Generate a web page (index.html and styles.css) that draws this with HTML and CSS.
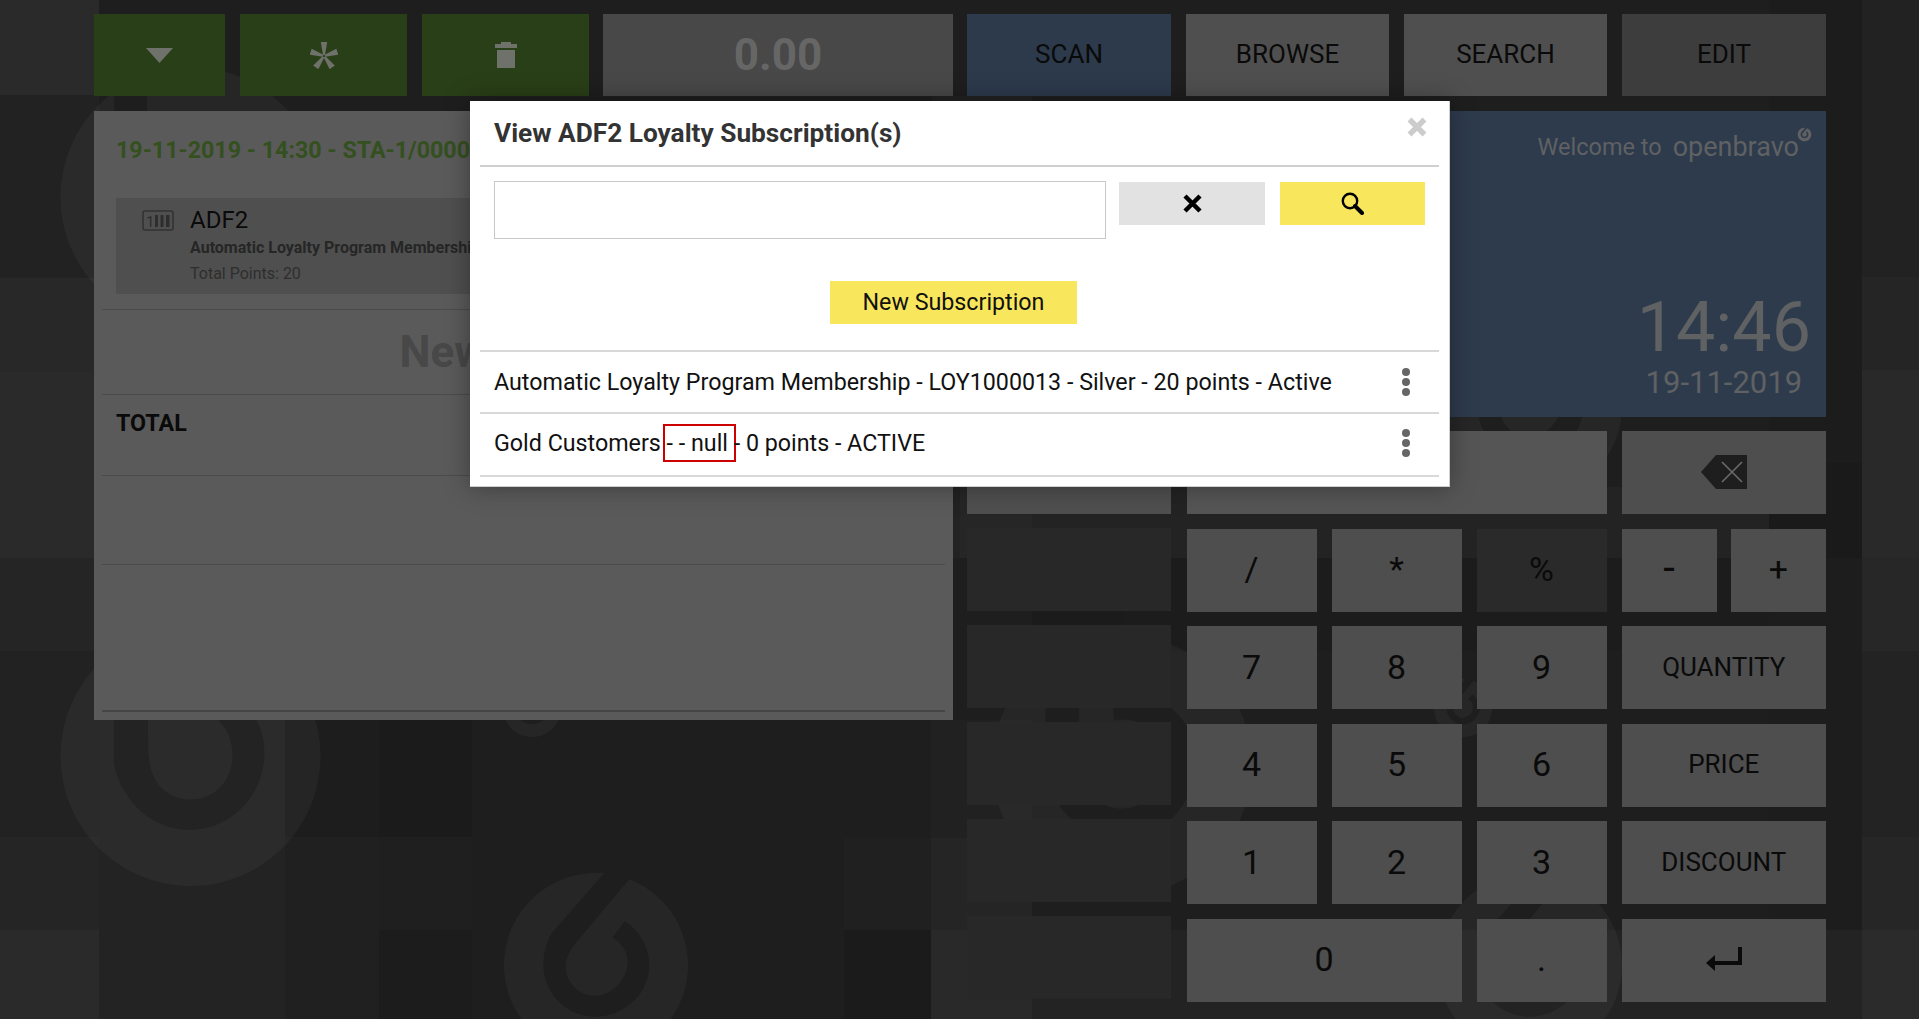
FILE: index.html
```html
<!DOCTYPE html>
<html lang="en">
<head>
<meta charset="utf-8">
<title>Openbravo POS</title>
<link rel="stylesheet" href="styles.css">
</head>
<body>
<svg class="backdrop" width="1919" height="1019" viewBox="0 0 1919 1019" aria-hidden="true">
  <defs>
    <path id="drop" d="M36.2,-93.2 A100,100 0 1 1 8.7,-99.6 L-48.2,-34.4 C-54,-25 -57.2,-13 -57.2,0 C-57.2,31 -32,56.2 -1,56.2 C31,56.2 58,31 58,0 C58,-20 47,-37 31.5,-47.8 L17.8,-30 C28,-24 34.4,-14 34.4,-3.6 C34.4,16 17,33.3 -1,33.3 C-18,33.3 -33,19 -33,1.8 C-33,-8 -27,-18 -21,-25.4 Z"/>
  </defs>
  <rect width="1919" height="1019" fill="#1e1e1e"/>
  <g>
    <rect x="0" y="0" width="99" height="95" fill="#2a2a2a"/>
    <rect x="0" y="95" width="99" height="183" fill="#222"/>
    <rect x="0" y="278" width="99" height="94" fill="#282828"/>
    <rect x="0" y="372" width="99" height="186" fill="#2a2a2a"/>
    <rect x="0" y="558" width="99" height="93" fill="#252525"/>
    <rect x="0" y="651" width="99" height="186" fill="#222"/>
    <rect x="0" y="837" width="99" height="93" fill="#252525"/>
    <rect x="0" y="930" width="99" height="89" fill="#2a2a2a"/>
    <rect x="99" y="720" width="186" height="117" fill="#232323"/>
    <rect x="99" y="837" width="186" height="182" fill="#232323"/>
    <rect x="285" y="720" width="94" height="117" fill="#1d1d1d"/>
    <rect x="285" y="837" width="94" height="182" fill="#202020"/>
    <rect x="379" y="720" width="93" height="117" fill="#1b1b1b"/>
    <rect x="379" y="837" width="93" height="93" fill="#1f1f1f"/>
    <rect x="379" y="930" width="93" height="89" fill="#1c1c1c"/>
    <rect x="472" y="930" width="93" height="89" fill="#1e1e1e"/>
    <rect x="844" y="930" width="87" height="89" fill="#1b1b1b"/>
    <rect x="844" y="838" width="87" height="92" fill="#202020"/>
    <rect x="931" y="720" width="101" height="118" fill="#212121"/>
    <rect x="931" y="838" width="101" height="92" fill="#252525"/>
    <rect x="931" y="930" width="101" height="89" fill="#292929"/>
    <rect x="932" y="96" width="100" height="462" fill="#222"/>
    <rect x="960" y="487" width="72" height="71" fill="#262626"/>
    <rect x="1032" y="558" width="93" height="93" fill="#1b1b1b"/>
    <rect x="1032" y="651" width="430" height="186" fill="#1e1e1e"/>
    <rect x="1032" y="930" width="830" height="89" fill="#232323"/>
    <rect x="1032" y="487" width="830" height="71" fill="#232323"/>
    <rect x="1125" y="558" width="737" height="93" fill="#1c1c1c"/>
    <rect x="1769" y="0" width="93" height="463" fill="#1c1c1c"/>
    <rect x="1769" y="463" width="93" height="95" fill="#1a1a1a"/>
    <rect x="1769" y="558" width="93" height="372" fill="#1d1d1d"/>
    <rect x="1862" y="0" width="57" height="277" fill="#222"/>
    <rect x="1862" y="277" width="57" height="93" fill="#252525"/>
    <rect x="1862" y="370" width="57" height="187" fill="#292929"/>
    <rect x="1862" y="557" width="57" height="94" fill="#272727"/>
    <rect x="1862" y="651" width="57" height="186" fill="#232323"/>
    <rect x="1862" y="837" width="57" height="93" fill="#262626"/>
    <rect x="1862" y="930" width="57" height="89" fill="#2b2b2b"/>
  </g>
  <g class="mark">
    <use href="#drop" transform="translate(190.5,756) rotate(-41) scale(1.3)"/>
    <use href="#drop" transform="translate(190.5,197) rotate(-41) scale(1.3)"/>
    <use href="#drop" transform="translate(1122,765) rotate(-41) scale(1.3)"/>
    <use href="#drop" transform="translate(596,965) scale(.92)"/>
    <use href="#drop" transform="translate(1530,965) scale(.92)"/>
    <use href="#drop" transform="translate(1530,406) scale(.92)"/>
    <use href="#drop" transform="translate(532,708) scale(.29)"/>
    <use href="#drop" transform="translate(1463,708) scale(.29)"/>
  </g>
</svg>

<div class="pos">
  <section class="side">
    <div class="toolbar">
      <div class="tool tool-menu">
        <svg width="27" height="15" viewBox="0 0 27 15"><path class="ico" d="M0 0H27L13.5 15Z"/></svg>
      </div>
      <div class="tool tool-wide">
        <svg width="28" height="27" viewBox="-14 -14 28 27">
          <g class="ico">
            <path d="M-1 -1 L-3.2 -14 H3.2 L1 -1Z"/>
            <path d="M-1 -1 L-3.2 -14 H3.2 L1 -1Z" transform="rotate(72)"/>
            <path d="M-1 -1 L-3.2 -14 H3.2 L1 -1Z" transform="rotate(144)"/>
            <path d="M-1 -1 L-3.2 -14 H3.2 L1 -1Z" transform="rotate(216)"/>
            <path d="M-1 -1 L-3.2 -14 H3.2 L1 -1Z" transform="rotate(288)"/>
          </g>
        </svg>
      </div>
      <div class="tool tool-wide">
        <svg width="22" height="26" viewBox="0 0 22 26"><path class="ico" d="M6 0H16V2H22V6H0V2H6ZM2 8H20V26H2Z"/></svg>
      </div>
      <div class="total-box">0.00</div>
    </div>
    <div class="ticket">
      <div class="ticket-head">19-11-2019 - 14:30 - STA-1/0000123</div>
      <div class="item">
        <svg class="barcode" width="32" height="21" viewBox="0 0 32 21">
          <rect x="1" y="1" width="30" height="19" rx="2" class="bc-box"/>
          <text x="4" y="16.5" class="bc-one">1</text>
          <rect x="13" y="5" width="3" height="12" class="bc-bar"/>
          <rect x="18.5" y="5" width="3" height="12" class="bc-bar"/>
          <rect x="24" y="5" width="3.5" height="12" class="bc-bar"/>
        </svg>
        <div class="item-text">
          <div class="item-name">ADF2</div>
          <div class="item-sub">Automatic Loyalty Program Membership</div>
          <div class="item-points">Total Points: 20</div>
        </div>
      </div>
      <div class="new-line">New Receipt</div>
      <div class="total-line">TOTAL</div>
      <div class="empty-line"></div>
      <div class="ticket-end"></div>
    </div>
  </section>

  <section class="side">
    <div class="toolbar toolbar-right">
      <div class="tab tab-scan">SCAN</div>
      <div class="tab">BROWSE</div>
      <div class="tab">SEARCH</div>
      <div class="tab tab-edit">EDIT</div>
    </div>
    <div class="welcome">
      <div class="welcome-top">
        <span>Welcome to</span>
        <span class="brand">openbravo</span>
        <svg class="brand-mark" width="15" height="15" viewBox="-110 -110 220 220"><use href="#drop"/></svg>
      </div>
      <div class="clock">
        <div class="time">14:46</div>
        <div class="date">19-11-2019</div>
      </div>
    </div>
    <div class="keypad">
      <div class="spare">
        <div class="spare-key spare-first"></div>
        <div class="spare-key"></div>
        <div class="spare-key"></div>
        <div class="spare-key"></div>
        <div class="spare-key"></div>
        <div class="spare-key"></div>
      </div>
      <div class="keys">
        <div class="display"></div>
        <div class="key key-word">
          <svg width="46" height="34" viewBox="0 0 46 34">
            <path class="bs-body" d="M15 0H46V34H15L0 17Z"/>
            <path class="bs-x" d="M21 7L41 27M41 7L21 27"/>
          </svg>
        </div>
        <div class="key">/</div>
        <div class="key">*</div>
        <div class="key key-off">%</div>
        <div class="pair">
          <div class="key key-minus">-</div>
          <div class="key">+</div>
        </div>
        <div class="key">7</div>
        <div class="key">8</div>
        <div class="key">9</div>
        <div class="key key-word">QUANTITY</div>
        <div class="key">4</div>
        <div class="key">5</div>
        <div class="key">6</div>
        <div class="key key-word">PRICE</div>
        <div class="key">1</div>
        <div class="key">2</div>
        <div class="key">3</div>
        <div class="key key-word">DISCOUNT</div>
        <div class="key key-zero">0</div>
        <div class="key">.</div>
        <div class="key key-word">
          <svg width="36" height="24" viewBox="0 0 36 24">
            <path class="enter-line" d="M34 0V16H8"/>
            <path class="enter-head" d="M0 16L9 8V24Z"/>
          </svg>
        </div>
      </div>
    </div>
  </section>
</div>

<div class="modal">
  <header class="modal-head">
    <h1 class="modal-title">View ADF2 Loyalty Subscription(s)</h1>
    <svg class="modal-close" width="20" height="20" viewBox="0 0 20 20"><path d="M2.5 2.5L17.5 17.5M17.5 2.5L2.5 17.5"/></svg>
  </header>
  <div class="filter">
    <div class="filter-input"></div>
    <div class="filter-btn btn-clear">
      <svg width="19" height="19" viewBox="0 0 19 19"><path class="x-black" d="M2 2L17 17M17 2L2 17"/></svg>
    </div>
    <div class="filter-btn btn-search">
      <svg width="23" height="23" viewBox="0 0 23 23"><circle class="lens" cx="9" cy="9" r="7.2"/><path class="handle" d="M14 14L21 21"/></svg>
    </div>
  </div>
  <div class="new-row"><div class="new-btn">New Subscription</div></div>
  <div class="sub-list">
    <div class="sub-row">
      <span>Automatic Loyalty Program Membership - LOY1000013 - Silver - 20 points - Active</span>
      <svg class="more" width="10" height="28" viewBox="0 0 10 28"><circle cx="5" cy="4" r="4"/><circle cx="5" cy="14" r="4"/><circle cx="5" cy="24" r="4"/></svg>
    </div>
    <div class="sub-row sub-row-last">
      <span>Gold Customers <span class="flag">- - null</span> - 0 points - ACTIVE</span>
      <svg class="more" width="10" height="28" viewBox="0 0 10 28"><circle cx="5" cy="4" r="4"/><circle cx="5" cy="14" r="4"/><circle cx="5" cy="24" r="4"/></svg>
    </div>
  </div>
</div>
</body>
</html>
```

FILE: styles.css
```css
* { box-sizing: border-box; }
html, body { margin: 0; padding: 0; height: 100%; }
body {
  width: 1919px;
  height: 1019px;
  overflow: hidden;
  position: relative;
  background: #1e1e1e;
  font-family: Roboto, "Liberation Sans", sans-serif;
  color: #0a0a0a;
}
.backdrop { position: absolute; left: 0; top: 0; }
.mark { fill: rgba(255, 255, 255, .04); }

.pos {
  position: relative;
  display: flex;
  gap: 14px;
  padding: 14px 0 0 94px;
}
.side { width: 859px; display: flex; flex-direction: column; gap: 15px; }

.toolbar { display: flex; gap: 15px; height: 82px; }
.tool {
  background: #293f17;
  display: flex;
  align-items: center;
  justify-content: center;
  width: 131px;
}
.tool-wide { width: 167px; }
.ico { fill: #6f716b; }
.total-box {
  flex: 1;
  margin-left: -1px;
  background: #484848;
  color: #666;
  font-size: 44px;
  font-weight: 700;
  display: flex;
  align-items: center;
  justify-content: center;
}
.tab {
  width: 203px;
  background: #4f4f4f;
  display: flex;
  align-items: center;
  justify-content: center;
  font-size: 26px;
  padding-bottom: 2px;
}
.tab-scan { background: #2c3a4c; width: 204px; }
.tab-edit { background: #3d3d3d; width: 204px; }

.ticket {
  height: 609px;
  background: #5a5a5a;
  padding: 0 8px;
  display: flex;
  flex-direction: column;
}
.ticket-head {
  height: 78px;
  padding-left: 14px;
  display: flex;
  align-items: center;
  font-size: 23.25px;
  font-weight: 700;
  color: #34501f;
  white-space: nowrap;
}
.item {
  margin: 9px 14px 15px;
  height: 96px;
  background: #4f4f4f;
  display: flex;
  padding: 12px 0 0 26px;
}
.barcode { flex: none; margin-right: 16px; }
.bc-box { fill: none; stroke: #333; stroke-width: 1.6; }
.bc-bar { fill: #2e2e2e; }
.bc-one { font-size: 15px; fill: #2e2e2e; font-family: Roboto, sans-serif; }
.item-text { margin-top: -4px; }
.item-name { font-size: 24px; line-height: 28px; }
.item-sub { font-size: 16px; line-height: 28px; font-weight: 700; color: #262626; white-space: nowrap; }
.item-points { font-size: 16px; line-height: 24px; color: #2e2e2e; }
.new-line {
  height: 85px;
  border-top: 1px solid #4b4b4b;
  display: flex;
  align-items: center;
  justify-content: center;
  font-size: 44px;
  font-weight: 700;
  color: #484848;
}
.total-line {
  height: 81px;
  border-top: 1px solid #4b4b4b;
  padding: 13px 0 0 14px;
  font-size: 23.25px;
  line-height: 30px;
  font-weight: 700;
}
.empty-line { height: 89px; border-top: 1px solid #4b4b4b; }
.ticket-end { height: 148px; border-top: 1px solid #4b4b4b; border-bottom: 2px solid #454545; }

.welcome {
  height: 306px;
  background: #2e3b4d;
  color: #5f6163;
  padding: 0 12px 0 0;
  display: flex;
  flex-direction: column;
  align-items: flex-end;
}
.welcome-top {
  height: 71px;
  display: flex;
  align-items: center;
  font-size: 23.5px;
  position: relative;
  padding-right: 15px;
}
.brand { font-size: 27px; margin-left: 11px; }
.brand-mark { position: absolute; right: 2px; top: 16px; fill: #5f6163; }
.clock { margin-top: 107px; padding-right: 3px; text-align: center; }
.time { font-size: 70px; font-weight: 400; line-height: 74px; margin-top: 1px; }
.date { font-size: 31px; line-height: 38px; }

.keypad { display: flex; gap: 15.5px; height: 571px; margin-top: -1px; }
.spare { width: 204px; display: flex; flex-direction: column; gap: 14px; }
.spare-key { height: 83px; background: #282828; }
.spare-first { background: #4f4f4f; }
.keys {
  flex: 1;
  display: grid;
  grid-template-columns: 130px 130px 130px 204.5px;
  grid-template-rows: repeat(6, 83px);
  column-gap: 15px;
  row-gap: 14.5px;
}
.display { grid-column: 1 / span 3; background: #555; }
.key {
  background: #4e4e4e;
  display: flex;
  align-items: center;
  justify-content: center;
  font-size: 34px;
  padding-bottom: 2px;
}
.key-word { font-size: 26px; }
.key-minus { font-size: 42px; padding-bottom: 6px; }
.key-off { background: #2a2a2a; }
.key-zero { grid-column: 1 / span 2; }
.pair { display: flex; gap: 14px; }
.pair .key { flex: 1; }
.bs-body { fill: #1e1e1e; }
.bs-x { stroke: #6a6a6a; stroke-width: 1.6; fill: none; }
.enter-line { stroke: #0a0a0a; stroke-width: 4; fill: none; }
.enter-head { fill: #0a0a0a; }

.modal {
  position: absolute;
  left: 470px;
  top: 101px;
  width: 980px;
  height: 386px;
  background: #fff;
  padding: 0 10px;
  box-shadow: 0 0 24px rgba(0, 0, 0, .35);
  border: 1px solid #cfcfcf;
  border-width: 0 1px 1px 0;
}
.modal-head {
  position: relative;
  height: 66px;
  border-bottom: 2px solid #d0d0d0;
  display: flex;
  align-items: center;
  padding-left: 14px;
}
.modal-title { margin: 0; font-size: 26.25px; font-weight: 700; color: #333; }
.modal-close { position: absolute; right: 12px; top: 16px; }
.modal-close path { stroke: #ccc; stroke-width: 5.5; fill: none; }
.filter { display: flex; padding: 14px 0 0 14px; height: 114px; align-items: flex-start; }
.filter-input { width: 612px; height: 58px; border: 1px solid #c8c8c8; }
.filter-btn {
  height: 43px;
  display: flex;
  align-items: center;
  justify-content: center;
  margin-top: 1px;
  width: 146px;
}
.btn-clear { background: #e2e2e2; margin-left: 13px; }
.btn-search { background: #f8e75d; margin-left: 15px; width: 145px; }
.x-black { stroke: #000; stroke-width: 4.5; fill: none; }
.lens { fill: none; stroke: #000; stroke-width: 2.4; }
.handle { stroke: #000; stroke-width: 4; stroke-linecap: round; }
.new-row { display: flex; justify-content: center; height: 69px; padding-right: 12px; }
.new-btn {
  width: 247px;
  height: 43px;
  background: #f8e75d;
  display: flex;
  align-items: center;
  justify-content: center;
  font-size: 23.25px;
  color: #111;
  padding-bottom: 2px;
}
.sub-row {
  height: 62px;
  border-top: 2px solid #d8d8d8;
  display: flex;
  align-items: center;
  justify-content: space-between;
  padding: 0 28px 0 14px;
  font-size: 23.25px;
  color: #111;
}
.sub-row-last { height: 65px; border-bottom: 2px solid #d8d8d8; padding-bottom: 3px; }
.flag {
  display: inline-block;
  border: 2px solid #c00;
  line-height: 34px;
  padding: 0 6px 0 2px;
  margin: 0 -8px 0 -4px;
}
.more { fill: #666; flex: none; }
```
